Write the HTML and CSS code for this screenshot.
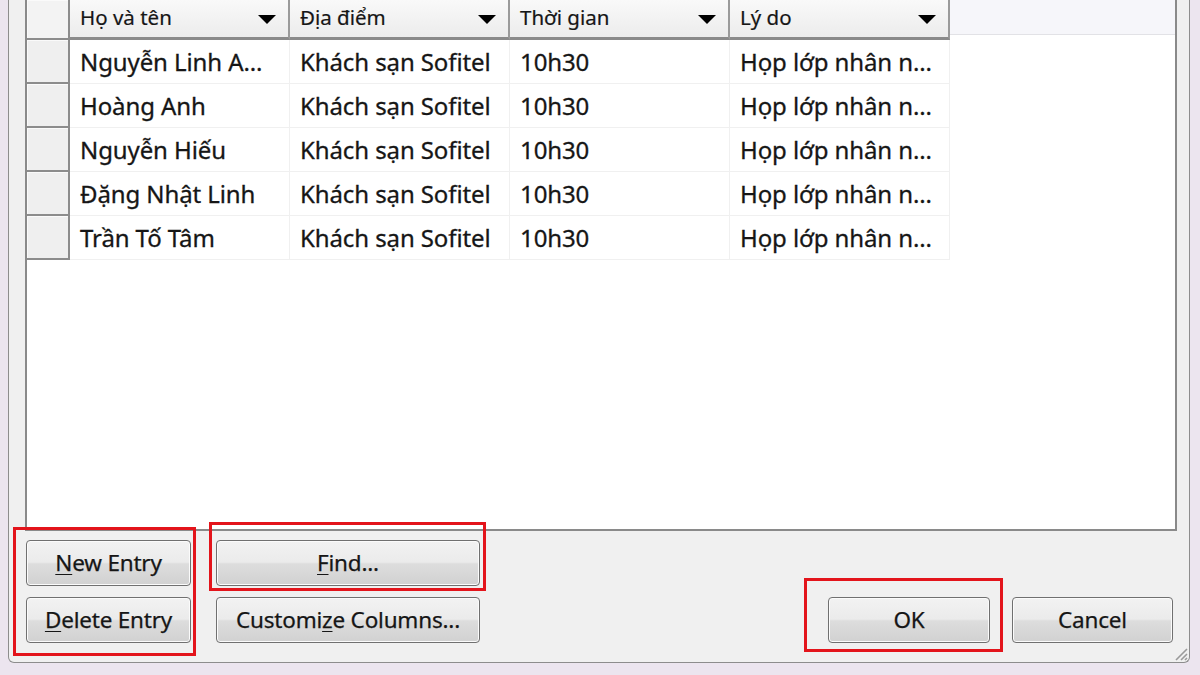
FILE: index.html
```html
<!DOCTYPE html>
<html lang="vi">
<head>
<meta charset="utf-8">
<title>Danh sách</title>
<link rel="stylesheet" href="styles.css">
</head>
<body>
<div class="dialog">
  <div class="list">
    <div class="row head">
      <div class="rh"></div>
      <div class="hc"><span>Họ và tên</span><i class="arrow"></i></div>
      <div class="hc"><span>Địa điểm</span><i class="arrow"></i></div>
      <div class="hc"><span>Thời gian</span><i class="arrow"></i></div>
      <div class="hc"><span>Lý do</span><i class="arrow"></i></div>
      <div class="hfill"></div>
    </div>
    <div class="row">
      <div class="rh"></div>
      <div class="c">Nguyễn Linh A...</div>
      <div class="c">Khách sạn Sofitel</div>
      <div class="c">10h30</div>
      <div class="c">Họp lớp nhân n...</div>
    </div>
    <div class="row">
      <div class="rh"></div>
      <div class="c">Hoàng Anh</div>
      <div class="c">Khách sạn Sofitel</div>
      <div class="c">10h30</div>
      <div class="c">Họp lớp nhân n...</div>
    </div>
    <div class="row">
      <div class="rh"></div>
      <div class="c">Nguyễn Hiếu</div>
      <div class="c">Khách sạn Sofitel</div>
      <div class="c">10h30</div>
      <div class="c">Họp lớp nhân n...</div>
    </div>
    <div class="row">
      <div class="rh"></div>
      <div class="c">Đặng Nhật Linh</div>
      <div class="c">Khách sạn Sofitel</div>
      <div class="c">10h30</div>
      <div class="c">Họp lớp nhân n...</div>
    </div>
    <div class="row">
      <div class="rh"></div>
      <div class="c">Trần Tố Tâm</div>
      <div class="c">Khách sạn Sofitel</div>
      <div class="c">10h30</div>
      <div class="c">Họp lớp nhân n...</div>
    </div>
  </div>
  <div class="actions">
    <div class="col left">
      <button class="btn"><u>N</u>ew Entry</button>
      <button class="btn"><u>D</u>elete Entry</button>
    </div>
    <div class="col mid">
      <button class="btn"><u>F</u>ind...</button>
      <button class="btn">Customi<u>z</u>e Columns...</button>
    </div>
    <div class="col right">
      <button class="btn ok">OK</button>
      <button class="btn cancel">Cancel</button>
    </div>
  </div>
  <svg class="grip" width="14" height="14" viewBox="0 0 14 14">
    <path d="M13 2 L2 13 M13 7 L7 13 M13 11 L11 13" stroke="#9a9a9a" stroke-width="1.6" fill="none"/>
  </svg>
</div>
<div class="mark m1"></div>
<div class="mark m2"></div>
<div class="mark m3"></div>
</body>
</html>
```
FILE: styles.css
```css
* { box-sizing: border-box; }
html, body { margin: 0; padding: 0; }
body {
  width: 1200px;
  height: 675px;
  background: #ece5ef;
  font-family: "Noto Sans", "Open Sans", sans-serif;
  font-size: 21px;
  color: #161616;
  position: relative;
  overflow: hidden;
}
.dialog {
  position: relative;
  margin-left: 8px;
  width: 1182px;
  height: 663px;
  background: #f0f0f0;
  border-left: 1px solid #8d8d8d;
  border-right: 1px solid #8d8d8d;
  border-bottom: 1px solid #8d8d8d;
  border-bottom-left-radius: 6px;
  border-bottom-right-radius: 6px;
  padding: 0 12px 0 16px;
  display: flex;
  flex-direction: column;
}
.list {
  height: 531px;
  background: #fff;
  border: 2px solid #8a8a8a;
  border-top: none;
  display: flex;
  flex-direction: column;
}
.row {
  display: flex;
  height: 44px;
}
.row.head { height: 40px; }
.rh {
  width: 43px;
  flex: none;
  background: #efefef;
  border-right: 2px solid #8c8c8c;
  border-bottom: 2px solid #8c8c8c;
  box-shadow: inset 1px 1px 0 #fafafa;
}
.head .rh { background: #f3f3f3; }
.hc {
  width: 220px;
  flex: none;
  display: flex;
  align-items: center;
  justify-content: space-between;
  padding: 0 12px 3px 10px;
  font-size: 20.5px;
  -webkit-text-stroke: 0.2px #161616;
  background: linear-gradient(#f9f9f9, #ececec);
  border-right: 2px solid #9a9a9a;
  border-bottom: 3px solid #8a8a8a;
}
.arrow {
  width: 0;
  height: 0;
  border-left: 9px solid transparent;
  border-right: 9px solid transparent;
  border-top: 9px solid #000;
  margin-top: 4px;
}
.hfill {
  flex: 1;
  height: 35px;
  background: #f6f6fa;
  border-bottom: 1px solid #e2e2e6;
}
.c {
  width: 220px;
  flex: none;
  display: flex;
  align-items: center;
  padding: 0 0 1px 10px;
  font-size: 24px;
  letter-spacing: -0.1px;
  -webkit-text-stroke: 0.3px #161616;
  white-space: nowrap;
  overflow: hidden;
  border-right: 1px solid #f0f0f0;
  border-bottom: 1px solid #f0f0f0;
}
.actions {
  display: flex;
  padding: 9px 0 0 1px;
  gap: 25px;
}
.col {
  display: flex;
  flex-direction: column;
  gap: 11px;
}
.left { width: 165px; }
.mid { width: 264px; }
.right {
  margin-left: auto;
  flex-direction: row;
  align-items: flex-end;
  gap: 22px;
  padding-top: 57px;
  margin-right: 4px;
}
.btn {
  height: 46px;
  width: 100%;
  font-family: inherit;
  font-size: 22.5px;
  letter-spacing: -0.2px;
  -webkit-text-stroke: 0.25px #161616;
  color: #161616;
  border: 1px solid #707070;
  border-radius: 4px;
  background: linear-gradient(#f2f2f2 0%, #ebebeb 48%, #dddddd 52%, #d1d1d1 100%);
  box-shadow: inset 0 0 0 1px #fbfbfb;
  padding: 0 0 2px;
}
.btn u { text-decoration-thickness: 1px; text-underline-offset: 3px; }
.ok { width: 162px; }
.cancel { width: 161px; }
.grip {
  position: absolute;
  right: 1px;
  bottom: 1px;
}
.mark {
  position: absolute;
  border: 3px solid #e3141b;
}
.m1 { left: 13px; top: 527px; width: 183px; height: 129px; }
.m2 { left: 209px; top: 522px; width: 277px; height: 69px; }
.m3 { left: 804px; top: 578px; width: 199px; height: 74px; }
```
